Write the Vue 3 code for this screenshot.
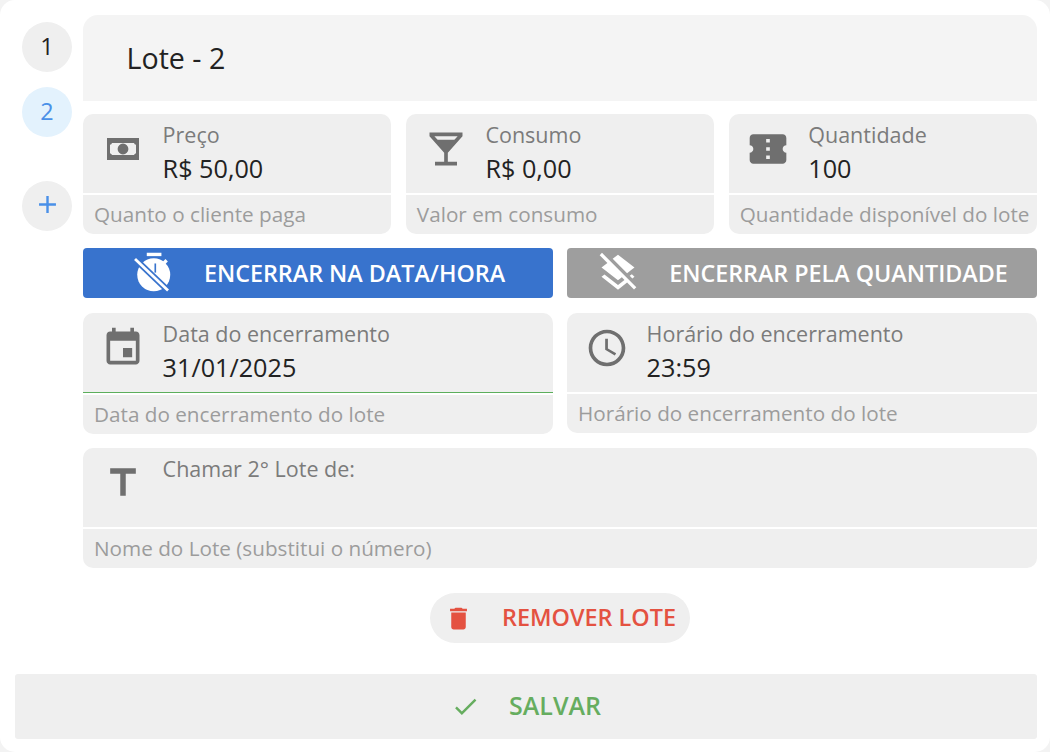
<script setup>
const PATHS = {
  money: 'M0 0H32V22H0ZM5 5Q4.6 6.4 3 6.8V15.2Q4.6 15.6 5 17H27Q27.4 15.6 29 15.2V6.8Q27.4 6.4 27 5ZM16 5.6A5.4 5.4 0 1 1 16 16.4A5.4 5.4 0 1 1 16 5.6Z',
  bar: 'M21 5V3H3v2l8 9v5H6v2h12v-2h-5v-5l8-9zM7.43 7L5.66 5h12.69l-1.78 2H7.43z',
  ticket: 'M22 10V6c0-1.11-.9-2-2-2H4c-1.1 0-1.99.89-1.99 2v4c1.1 0 1.99.9 1.99 2s-.89 2-2 2v4c0 1.1.9 2 2 2h16c1.1 0 2-.9 2-2v-4c-1.1 0-2-.9-2-2s.9-2 2-2zm-9 7.5h-2v-2h2v2zm0-4.5h-2v-2h2v2zm0-4.5h-2v-2h2v2z',
  event: 'M17 12h-5v5h5v-5zM16 1v2H8V1H6v2H5c-1.11 0-1.99.9-1.99 2L3 19c0 1.1.89 2 2 2h14c1.1 0 2-.9 2-2V5c0-1.1-.9-2-2-2h-1V1h-2zm3 18H5V8h14v11z',
  clock: 'M11.99 2C6.47 2 2 6.48 2 12s4.47 10 9.99 10C17.52 22 22 17.52 22 12S17.52 2 11.99 2zM12 20c-4.42 0-8-3.58-8-8s3.58-8 8-8 8 3.58 8 8-3.58 8-8 8zm.5-13H11v6l5.25 3.15.75-1.23-4.5-2.67z',
  title: 'M5 4v3h5.5v12h3V7H19V4z',
}
const topFields = [
  { icon: 'money', label: 'Preço', value: 'R$ 50,00', hint: 'Quanto o cliente paga' },
  { icon: 'bar', label: 'Consumo', value: 'R$ 0,00', hint: 'Valor em consumo' },
  { icon: 'ticket', label: 'Quantidade', value: '100', hint: 'Quantidade disponível do lote' },
]
const dateFields = [
  { icon: 'event', label: 'Data do encerramento', value: '31/01/2025', hint: 'Data do encerramento do lote', focused: true },
  { icon: 'clock', label: 'Horário do encerramento', value: '23:59', hint: 'Horário do encerramento do lote' },
]
</script>

<template>
  <div class="dialog">
    <div class="body">
      <nav class="steps">
        <button class="step">1</button>
        <button class="step active">2</button>
        <button class="step add" aria-label="Adicionar">
          <svg viewBox="0 0 24 24" class="add-icon"><path d="M19 13h-6v6h-2v-6H5v-2h6V5h2v6h6v2z" /></svg>
        </button>
      </nav>

      <main class="main">
        <header class="heading">Lote - 2</header>

        <section class="row three">
          <div v-for="f in topFields" :key="f.label" class="field">
            <div class="field-top">
              <span class="field-icon">
                <svg v-if="f.icon === 'money'" viewBox="0 0 32 22" class="money"><path :d="PATHS.money" fill-rule="evenodd" /></svg>
                <svg v-else viewBox="0 0 24 24" class="icon"><path :d="PATHS[f.icon]" /></svg>
              </span>
              <div class="field-text">
                <div class="label">{{ f.label }}</div>
                <div class="value">{{ f.value }}</div>
              </div>
            </div>
            <div class="hint">{{ f.hint }}</div>
          </div>
        </section>

        <section class="row two toggles">
          <button class="toggle blue">
            <svg viewBox="0 0 24 24" class="icon toggle-icon timer">
              <path d="M8.6 1h8v1.8h-8z" />
              <path d="M18.8 4.4l1.3 1.3-1.6 1.6-1.3-1.3z" />
              <circle cx="12.4" cy="13" r="9" />
              <path d="M12.8 6.8h.9v5h-.9z" class="cut" />
              <path d="M2.2 4.4 20.2 21.5" class="slash-bg" />
              <path d="M2.2 4.4 20.2 21.5" class="slash" />
            </svg>
            <span>ENCERRAR NA DATA/HORA</span>
          </button>
          <button class="toggle grey">
            <svg viewBox="0 0 24 24" class="icon toggle-icon">
              <path d="M19.81 14.99l1.19-.92-1.43-1.43-1.19.92 1.43 1.43zm-.45-4.72L21 9l-9-7-2.91 2.27 7.87 7.88 2.4-1.88zM3.27 1L2 2.27l4.22 4.22L3 9l1.63 1.27L12 16l2.1-1.63 1.43 1.43L12 18.54l-7.37-5.73L3 14.07l9 7 4.95-3.85L20.73 21 22 19.73 3.27 1z" />
            </svg>
            <span>ENCERRAR PELA QUANTIDADE</span>
          </button>
        </section>

        <section class="row two dates">
          <div v-for="f in dateFields" :key="f.label" class="field">
            <div class="field-top" :class="{ focused: f.focused }">
              <span class="field-icon">
                <svg viewBox="0 0 24 24" class="icon"><path :d="PATHS[f.icon]" /></svg>
              </span>
              <div class="field-text">
                <div class="label">{{ f.label }}</div>
                <div class="value">{{ f.value }}</div>
              </div>
            </div>
            <div class="hint">{{ f.hint }}</div>
          </div>
        </section>

        <section class="field name-field">
          <div class="field-top">
            <span class="field-icon">
              <svg viewBox="0 0 24 24" class="icon"><path :d="PATHS.title" /></svg>
            </span>
            <div class="field-text">
              <div class="label">Chamar 2° Lote de:</div>
            </div>
          </div>
          <div class="hint">Nome do Lote (substitui o número)</div>
        </section>

        <div class="remove-wrap">
          <button class="remove">
            <svg viewBox="0 0 24 24" class="remove-icon"><path d="M6 19c0 1.1.9 2 2 2h8c1.1 0 2-.9 2-2V7H6v12zM19 4h-3.5l-1-1h-5l-1 1H5v2h14V4z" /></svg>
            <span class="remove-text">REMOVER LOTE</span>
          </button>
        </div>
      </main>
    </div>

    <button class="save">
      <svg viewBox="0 0 24 24" class="save-icon"><path d="M9 16.17L4.83 12l-1.42 1.41L9 19 21 7l-1.41-1.41z" /></svg>
      <span class="save-text">SALVAR</span>
    </button>
  </div>
</template>

<style>
html, body { margin: 0; background: #f3f3f3; }
</style>

<style scoped>
.dialog {
  width: 1050px;
  height: 752px;
  box-sizing: border-box;
  padding: 15px 13px 0 15px;
  background: #fff;
  border-radius: 15px;
  overflow: hidden;
  font-family: "Open Sans", sans-serif;
  display: flex;
  flex-direction: column;
}
button { border: 0; padding: 0; font-family: inherit; cursor: pointer; }
.body { display: flex; }
.steps {
  width: 68px;
  flex: none;
  box-sizing: border-box;
  padding: 7px 0 0 7px;
  display: flex;
  flex-direction: column;
  gap: 15px;
}
.step {
  width: 50px;
  height: 50px;
  border-radius: 50%;
  background: #efefef;
  color: #222;
  font-size: 23.4px;
  line-height: 50px;
  padding-bottom: 2px;
  display: flex;
  align-items: center;
  justify-content: center;
}
.step.active { background: #e3f2fd; color: #4a90e8; }
.step.add { margin-top: 29px; padding-bottom: 3px; }
.add-icon { width: 29px; height: 29px; fill: #4a90e8; }
.main { flex: 1; min-width: 0; display: flex; flex-direction: column; }
.heading {
  height: 86px;
  box-sizing: border-box;
  padding: 23px 0 0 43.5px;
  background: #f4f4f4;
  border-radius: 15px 15px 0 0;
  font-size: 28.6px;
  line-height: 40px;
  color: #222;
}
.row { display: grid; }
.three { grid-template-columns: repeat(3, 1fr); gap: 14.5px; margin-top: 13px; }
.two { grid-template-columns: repeat(2, 1fr); gap: 14px; }
.toggles { margin-top: 14px; }
.dates { margin-top: 15px; align-items: start; }
.field { border-radius: 10px; overflow: hidden; }
.field-top {
  height: 79px;
  box-sizing: border-box;
  background: #efefef;
  display: flex;
}
.field-top.focused { height: 80px; border-bottom: 1px solid #5cae5c; }
.field-icon {
  width: 79.6px;
  flex: none;
  box-sizing: border-box;
  padding-bottom: 9px;
  display: flex;
  align-items: center;
  justify-content: center;
}
.icon { width: 44px; height: 44px; fill: #6f6f6f; }
.money { width: 32px; height: 22px; fill: #6f6f6f; }
.field-text { padding-top: 7px; min-width: 0; }
.label { font-size: 21.5px; line-height: 27px; color: #7b7b7b; white-space: nowrap; }
.value { font-size: 25.2px; line-height: 33px; margin-top: 4px; color: #222; white-space: nowrap; }
.hint {
  height: 39px;
  box-sizing: border-box;
  margin-top: 2px;
  padding-left: 11px;
  background: #efefef;
  font-size: 20.7px;
  line-height: 38px;
  color: #9c9c9c;
  white-space: nowrap;
}
.toggle {
  height: 50px;
  border-radius: 4px;
  color: #fff;
  font-size: 23.3px;
  font-weight: 600;
  display: flex;
  align-items: center;
  justify-content: center;
  gap: 29px;
}
.toggle.blue { background: #3873cd; }
.toggle.grey { background: #9e9e9e; }
.toggle-icon { width: 44px; height: 44px; fill: #fff; }
.timer .cut { fill: #3873cd; }
.slash-bg { stroke: #3873cd; stroke-width: 3.4; fill: none; }
.slash { stroke: #fff; stroke-width: 1.5; fill: none; }
.name-field { margin-top: 14px; }
.remove-wrap { display: flex; justify-content: center; margin-top: 25px; }
.remove {
  width: 260px;
  height: 50px;
  box-sizing: border-box;
  padding-left: 14px;
  border-radius: 25px;
  background: #efefef;
  color: #e45241;
  font-size: 23.4px;
  font-weight: 600;
  display: flex;
  align-items: center;
  gap: 29px;
}
.remove-text { padding-bottom: 2px; }
.remove-icon { width: 29px; height: 29px; fill: #e45241; }
.save {
  height: 65px;
  margin-top: 31px;
  background: #efefef;
  color: #66ad5f;
  font-size: 25px;
  font-weight: 600;
  display: flex;
  align-items: center;
  justify-content: center;
  gap: 29px;
  border-radius: 3px;
}
.save-text { padding-bottom: 3px; }
.save-icon { width: 29px; height: 29px; fill: #66ad5f; }
</style>
